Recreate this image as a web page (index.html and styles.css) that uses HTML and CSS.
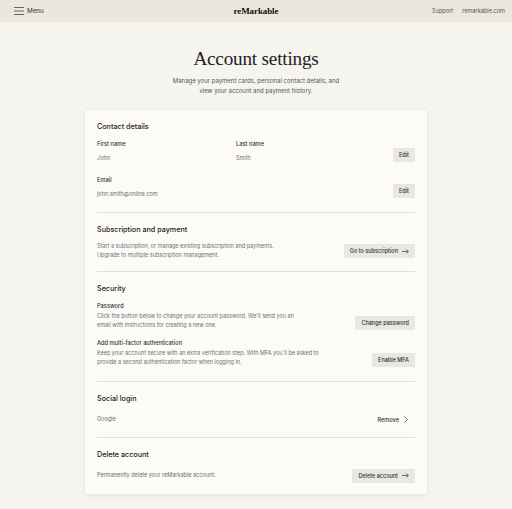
FILE: index.html
```html
<!DOCTYPE html>
<html lang="en">
<head>
<meta charset="utf-8">
<title>Account settings</title>
<link rel="stylesheet" href="styles.css">
</head>
<body>
<header class="topbar">
  <div class="menu">
    <svg class="burger" width="10" height="8" viewBox="0 0 10 8"><path d="M0 0.5H10M0 4H10M0 7.5H10" stroke="#555" stroke-width="0.9" fill="none"/></svg>
    <span>Menu</span>
  </div>
  <div class="logo">reMarkable</div>
  <nav class="links"><span>Support</span><span>remarkable.com</span></nav>
</header>
<main class="page">
  <h1 class="title">Account settings</h1>
  <p class="subtitle">Manage your payment cards, personal contact details, and<br>view your account and payment history.</p>
  <section class="card">
    <div class="section contact">
      <h2 class="heading">Contact details</h2>
      <div class="row fields-row">
        <div class="fields">
          <div class="field"><div class="label">First name</div><div class="value">John</div></div>
          <div class="field"><div class="label">Last name</div><div class="value">Smith</div></div>
        </div>
        <button class="btn">Edit</button>
      </div>
      <div class="row fields-row email-row">
        <div class="field"><div class="label">Email</div><div class="value">john.smith@online.com</div></div>
        <button class="btn">Edit</button>
      </div>
    </div>
    <div class="section subscription">
      <h2 class="heading">Subscription and payment</h2>
      <div class="row center">
        <p class="text">Start a subscription, or manage existing subscription and payments.<br>Upgrade to multiple subscription management.</p>
        <button class="btn">Go to subscription <svg class="arrow" width="7" height="5" viewBox="0 0 7 5"><path d="M0 2.5H6.3M4.2 0.4L6.3 2.5L4.2 4.6" stroke="#333" stroke-width="0.7" fill="none"/></svg></button>
      </div>
    </div>
    <div class="section security">
      <h2 class="heading">Security</h2>
      <div class="sub">
        <div class="label">Password</div>
        <div class="row end">
          <p class="text">Click the button below to change your account password. We'll send you an<br>email with instructions for creating a new one.</p>
          <button class="btn">Change password</button>
        </div>
      </div>
      <div class="sub mfa">
        <div class="label">Add multi-factor authentication</div>
        <div class="row end">
          <p class="text">Keep your account secure with an extra verification step. With MFA you'll be asked to<br>provide a second authentication factor when logging in.</p>
          <button class="btn">Enable MFA</button>
        </div>
      </div>
    </div>
    <div class="section social">
      <h2 class="heading">Social login</h2>
      <div class="row center">
        <p class="text">Google</p>
        <span class="remove">Remove <svg class="chev" width="4" height="7" viewBox="0 0 4 7"><path d="M0.5 0.5L3.4 3.5L0.5 6.5" stroke="#333" stroke-width="0.7" fill="none"/></svg></span>
      </div>
    </div>
    <div class="section delete">
      <h2 class="heading">Delete account</h2>
      <div class="row center">
        <p class="text">Permanently delete your reMarkable account.</p>
        <button class="btn">Delete account <svg class="arrow" width="7" height="5" viewBox="0 0 7 5"><path d="M0 2.5H6.3M4.2 0.4L6.3 2.5L4.2 4.6" stroke="#333" stroke-width="0.7" fill="none"/></svg></button>
      </div>
    </div>
  </section>
</main>
</body>
</html>
```
FILE: styles.css
```css
* { box-sizing: border-box; }
html, body { margin: 0; padding: 0; }
body {
  background: #f6f4ef;
  font-family: Inter, "Liberation Sans", Arial, sans-serif;
  color: #333;
  width: 512px;
  height: 509px;
  overflow: hidden;
}
.topbar {
  height: 22px;
  background: #ebe7dd;
  display: flex;
  align-items: center;
  justify-content: space-between;
  padding: 0 7px 0 14px;
  position: relative;
}
.menu { display: flex; align-items: center; gap: 3px; font-size: 6.3px; color: #333; }
.burger { display: block; }
.logo {
  position: absolute;
  left: 50%;
  top: 0;
  transform: translateX(-50%);
  line-height: 22px;
  font-family: "Liberation Serif", "Times New Roman", serif;
  font-weight: bold;
  font-size: 9px;
  color: #111;
  letter-spacing: -0.1px;
}
.links { display: flex; gap: 9px; font-size: 5.6px; color: #555; }
.page { padding-top: 24px; }
.title {
  margin: 0;
  text-align: center;
  font-family: "Liberation Serif", "Times New Roman", serif;
  font-weight: normal;
  font-size: 19.2px;
  line-height: 26px;
  color: #222;
  letter-spacing: -0.2px;
}
.subtitle {
  margin: 4px 0 0;
  text-align: center;
  font-size: 6px;
  line-height: 10px;
  color: #555;
}
.card {
  width: 342px;
  margin: 14px auto 0;
  background: #fcfbf8;
  box-shadow: 0 1px 6px rgba(60, 50, 30, 0.09);
  padding: 0 12px;
}
.section { padding: 12px 0 12px; border-top: 1px solid #e2dfd9; }
.section:first-child { border-top: none; }
.heading {
  margin: 0;
  font-weight: 500;
  font-size: 7.2px;
  line-height: 10px;
  color: #222;
}
.row { display: flex; justify-content: space-between; }
.row.center { align-items: center; }
.row.end { align-items: flex-end; }
.fields-row { align-items: flex-end; margin-top: 8px; }
.email-row { margin-top: 14px; }
.contact { padding-bottom: 14px; }
.fields { display: flex; }
.fields .field { width: 139px; }
.label { font-size: 5.7px; line-height: 8px; color: #333; font-weight: 500; }
.value { font-size: 5.5px; line-height: 8px; color: #6e6e6e; margin-top: 6px; }
.text { margin: 0; font-size: 5.5px; line-height: 9px; color: #6e6e6e; }
.section > .row.center { margin-top: 8px; }
.subscription > .row.center { margin-top: 7px; }
.subscription { padding-bottom: 11px; }
.btn {
  border: none;
  background: #e9e7e2;
  font-family: inherit;
  font-size: 5.5px;
  color: #333;
  height: 14px;
  padding: 0 6px;
  display: flex;
  align-items: center;
  gap: 4px;
  font-weight: 500;
}
.arrow { display: block; }
.security .sub { margin-top: 8px; }
.security .sub .row { margin-top: 1.5px; }
.security .mfa { margin-top: 9.5px; }
.security { padding-bottom: 14px; }
.social > .row.center { margin-top: 11.5px; }
.social { padding-bottom: 12.5px; }
.remove { display: flex; align-items: center; gap: 5px; font-size: 5.6px; color: #333; font-weight: 500; margin-right: 7px; }
.delete > .row.center { margin-top: 9px; }
.delete { padding-bottom: 11px; }
```
